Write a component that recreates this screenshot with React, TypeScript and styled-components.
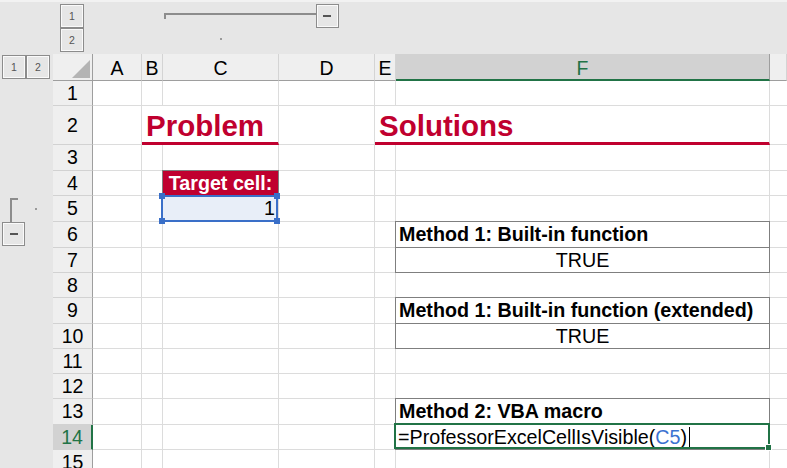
import React from "react"
import styled, { createGlobalStyle, css } from "styled-components"

const GRID = "#dcdcdc"
const HEAD_LINE = "#9e9e9e"
const BOX = "#7f7f7f"
const RED = "#c0002f"
const GREEN = "#217346"
const BLUE = "#3a6fc8"
const OUTLINE = "#8c8c8c"

const LETTERS = ["A", "B", "C", "D", "E", "F", "G"]
const ROW_HEIGHTS = [25, 39, 26, 25, 26, 26, 25, 25, 26, 25, 25, 25, 26, 25, 25]
const SELECTED_ROW = 14
const SELECTED_COL = "F"

const GlobalStyle = createGlobalStyle`
  html, body {
    margin: 0;
    padding: 0;
    background: #fff;
    overflow: hidden;
  }
  body {
    font-family: "Liberation Sans", Arial, sans-serif;
  }
`

const Sheet = styled.div`
  display: grid;
  width: 787px;
  height: 468px;
  overflow: hidden;
  grid-template-columns: 53px 40px 49px 21px 116px 96px 21px 374px 1fr;
  grid-template-rows: 28px 26px 27px ${ROW_HEIGHTS.map((h) => h + "px").join(" ")};
  background: #fff;
`

// outline (grouping) areas
const OutlineTop = styled.div`
  grid-column: 1 / -1;
  grid-row: 1 / 3;
  background: #e6e6e6;
  border-top: 2px solid #f2f2f2;
`

const OutlineSide = styled.div`
  grid-column: 1;
  grid-row: 3 / -1;
  background: #e6e6e6;
`

const TopLevels = styled.div`
  grid-column: 2;
  grid-row: 1 / 3;
  display: flex;
  flex-direction: column;
  padding: 4px 0 0 7px;
`

const SideLevels = styled.div`
  grid-column: 1;
  grid-row: 3;
  display: flex;
  padding: 1px 0 0 2px;
`

const LevelButton = styled.div`
  width: 24px;
  height: 24px;
  box-sizing: border-box;
  border: 1px solid ${OUTLINE};
  box-shadow: inset 0 0 0 1px #fafafa;
  background: #e6e6e6;
  display: flex;
  align-items: center;
  justify-content: center;
  font-size: 10.5px;
  color: #555;
`

const MinusButton = styled(LevelButton)<{ $row: number; $col: number }>`
  grid-row: ${(p) => p.$row};
  grid-column: ${(p) => p.$col};
  width: 23px;
  z-index: 1;
  &::after {
    content: "";
    width: 8px;
    height: 2px;
    background: #555;
  }
`

const TopMinus = styled(MinusButton)`
  justify-self: center;
  align-self: end;
`

const SideMinus = styled(MinusButton)`
  justify-self: start;
  align-self: start;
  margin-left: 2px;
`

const GroupLine = styled.div`
  grid-column: 5 / 7;
  grid-row: 1;
  align-self: start;
  margin: 13px 48px 0 1px;
  height: 4px;
  border-top: 2px solid ${OUTLINE};
  border-left: 2px solid ${OUTLINE};
`

const GroupBracket = styled.div`
  grid-column: 1;
  grid-row: 8;
  justify-self: start;
  margin: 2px 0 0 10px;
  width: 6px;
  border-top: 2px solid ${OUTLINE};
  border-left: 2px solid ${OUTLINE};
`

const GroupDot = styled.div<{ $row: number; $col: number; $left: number; $top: number }>`
  grid-row: ${(p) => p.$row};
  grid-column: ${(p) => p.$col};
  justify-self: start;
  align-self: start;
  margin: ${(p) => p.$top}px 0 0 ${(p) => p.$left}px;
  width: 2px;
  height: 2px;
  background: #9a9a9a;
`

// headers
const Corner = styled.div`
  grid-column: 2;
  grid-row: 3;
  position: relative;
  background: #efefef;
  border-right: 1px solid ${HEAD_LINE};
  border-bottom: 1px solid ${HEAD_LINE};
  &::after {
    content: "";
    position: absolute;
    right: 2px;
    bottom: 2px;
    border-left: 18px solid transparent;
    border-bottom: 18px solid #b4b4b4;
  }
`

const ColHeader = styled.div<{ $col: number; $selected?: boolean }>`
  grid-row: 3;
  grid-column: ${(p) => p.$col};
  display: flex;
  align-items: center;
  justify-content: center;
  padding-top: 3px;
  font-size: 19.5px;
  background: ${(p) => (p.$selected ? "#d2d2d2" : "#efefef")};
  color: ${(p) => (p.$selected ? GREEN : "#000")};
  border-right: 1px solid ${(p) => (p.$selected ? HEAD_LINE : "#d4d4d4")};
  border-bottom: ${(p) => (p.$selected ? `2px solid ${GREEN}` : `1px solid ${HEAD_LINE}`)};
`

const RowHeader = styled.div<{ $row: number; $selected?: boolean }>`
  grid-row: ${(p) => p.$row};
  grid-column: 2;
  display: flex;
  align-items: center;
  justify-content: center;
  font-size: 19.5px;
  background: ${(p) => (p.$selected ? "#d2d2d2" : "#efefef")};
  color: ${(p) => (p.$selected ? GREEN : "#000")};
  border-right: ${(p) => (p.$selected ? `2px solid ${GREEN}` : `1px solid ${HEAD_LINE}`)};
  border-bottom: 1px solid #d2d2d2;
`

// cells
const Cell = styled.div<{ $row: number; $col: number; $span?: number; $align?: string; $last?: boolean }>`
  grid-row: ${(p) => p.$row};
  grid-column: ${(p) => p.$col} / span ${(p) => p.$span ?? 1};
  display: flex;
  align-items: center;
  justify-content: ${(p) => p.$align ?? "flex-start"};
  min-width: 0;
  padding: 0 3px;
  white-space: nowrap;
  font-size: 19.7px;
  color: #000;
  background: #fff;
  border-right: ${(p) => (p.$last ? "none" : `1px solid ${GRID}`)};
  border-bottom: 1px solid ${GRID};
`

const HeadingCell = styled(Cell)`
  padding: 3px 0 0 4px;
  font-size: 29.5px;
  font-weight: 700;
  color: ${RED};
  border-bottom: 3px solid ${RED};
`

const boxed = css`
  border-right-color: ${BOX};
  border-bottom-color: ${BOX};
  box-shadow: 0 -1px 0 ${BOX}, -1px 0 0 ${BOX}, -1px -1px 0 ${BOX};
`

const BoxCell = styled(Cell)<{ $bold?: boolean }>`
  ${boxed}
  font-weight: ${(p) => (p.$bold ? 700 : 400)};
`

const TargetCell = styled(Cell)`
  ${boxed}
  border-bottom-color: ${RED};
  background: ${RED};
  color: #fff;
  font-weight: 700;
`

const SelectedCell = styled(Cell)`
  position: relative;
  background: #e8eef8;
`

const EditCell = styled(BoxCell)`
  position: relative;
  padding-left: 2px;
`

const SelectionFrame = styled.span<{ $color: string; $inset: string }>`
  position: absolute;
  inset: ${(p) => p.$inset};
  border: 2px solid ${(p) => p.$color};
  pointer-events: none;
`

const Handle = styled.span<{ $v: "top" | "bottom"; $h: "left" | "right" }>`
  position: absolute;
  ${(p) => p.$v}: -4px;
  ${(p) => p.$h}: -4px;
  width: 6px;
  height: 6px;
  background: ${BLUE};
`

const FillHandle = styled.span`
  position: absolute;
  right: -4px;
  bottom: -4px;
  width: 5px;
  height: 5px;
  background: ${GREEN};
  border: 1px solid #fff;
`

const RefText = styled.span`
  color: #3b72d1;
`

const Caret = styled.span`
  display: inline-block;
  width: 1px;
  height: 21px;
  margin-left: 2px;
  background: #000;
`

const Formula = styled.span`
  display: flex;
  align-items: center;
`

const renderCell = (row: number, ci: number) => {
  const letter = LETTERS[ci]
  const r = row + 3
  const c = ci + 3
  const key = `${letter}${row}`
  const last = letter === "G"

  if (key === "C2" || key === "F2") return null
  if (key === "B2")
    return (
      <HeadingCell key={key} $row={r} $col={c} $span={2}>
        Problem
      </HeadingCell>
    )
  if (key === "E2")
    return (
      <HeadingCell key={key} $row={r} $col={c} $span={2}>
        Solutions
      </HeadingCell>
    )
  if (key === "C4")
    return (
      <TargetCell key={key} $row={r} $col={c} $align="center">
        Target cell:
      </TargetCell>
    )
  if (key === "C5")
    return (
      <SelectedCell key={key} $row={r} $col={c} $align="flex-end">
        1
        <SelectionFrame $color={BLUE} $inset="-1px 0 -1px -2px">
          <Handle $v="top" $h="left" />
          <Handle $v="top" $h="right" />
          <Handle $v="bottom" $h="left" />
          <Handle $v="bottom" $h="right" />
        </SelectionFrame>
      </SelectedCell>
    )
  if (key === "F6" || key === "F9" || key === "F13") {
    const label = {
      F6: "Method 1: Built-in function",
      F9: "Method 1: Built-in function (extended)",
      F13: "Method 2: VBA macro",
    }[key]
    return (
      <BoxCell key={key} $row={r} $col={c} $bold>
        {label}
      </BoxCell>
    )
  }
  if (key === "F7" || key === "F10")
    return (
      <BoxCell key={key} $row={r} $col={c} $align="center">
        TRUE
      </BoxCell>
    )
  if (key === "F14")
    return (
      <EditCell key={key} $row={r} $col={c}>
        <Formula>
          =ProfessorExcelCellIsVisible(<RefText>C5</RefText>)<Caret />
        </Formula>
        <SelectionFrame $color={GREEN} $inset="-2px -1px 0 -2px">
          <FillHandle />
        </SelectionFrame>
      </EditCell>
    )
  return <Cell key={key} $row={r} $col={c} $last={last} />
}

export default function App() {
  return (
    <>
      <GlobalStyle />
      <Sheet>
        <OutlineTop />
        <OutlineSide />

        <TopLevels>
          <LevelButton>1</LevelButton>
          <LevelButton>2</LevelButton>
        </TopLevels>
        <GroupLine />
        <TopMinus $row={1} $col={6} />
        <GroupDot $row={2} $col={5} $left={57} $top={10} />

        <SideLevels>
          <LevelButton>1</LevelButton>
          <LevelButton>2</LevelButton>
        </SideLevels>
        <GroupBracket />
        <GroupDot $row={8} $col={1} $left={35} $top={12} />
        <SideMinus $row={9} $col={1} />

        <Corner />
        {LETTERS.map((l, i) => (
          <ColHeader key={l} $col={i + 3} $selected={l === SELECTED_COL}>
            {l === "G" ? "" : l}
          </ColHeader>
        ))}

        {ROW_HEIGHTS.map((_, i) => {
          const row = i + 1
          return (
            <React.Fragment key={row}>
              <RowHeader $row={row + 3} $selected={row === SELECTED_ROW}>
                {row}
              </RowHeader>
              {LETTERS.map((_, ci) => renderCell(row, ci))}
            </React.Fragment>
          )
        })}
      </Sheet>
    </>
  )
}
